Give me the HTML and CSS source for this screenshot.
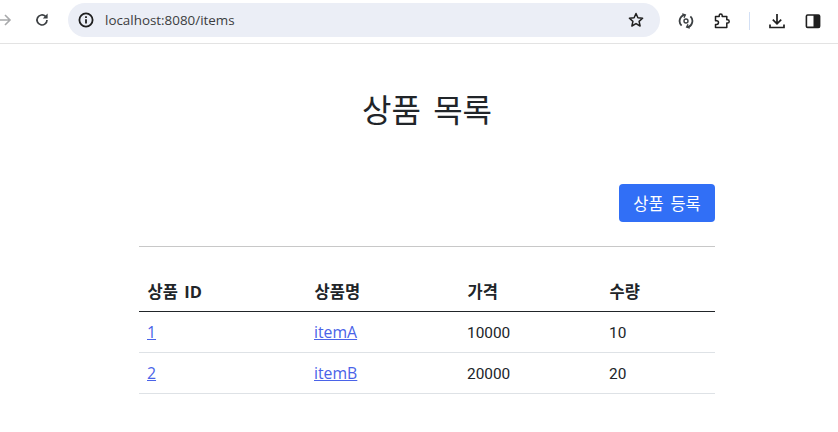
FILE: index.html
```html
<!DOCTYPE html>
<html lang="ko">
<head>
<meta charset="utf-8">
<title>상품 목록</title>
<link rel="stylesheet" href="styles.css">
</head>
<body>
<header class="toolbar">
  <svg class="icon back" viewBox="0 0 16 16"><path d="M-4 8H13M8 3l5 5-5 5" fill="none" stroke="#a8a9ab" stroke-width="1.6"/></svg>
  <svg class="icon reload" viewBox="0 0 16 16"><path d="M13 8a5 5 0 1 1-1.5-3.6" fill="none" stroke="#3c4043" stroke-width="1.7"/><path d="M13.6 1.6v4.8H8.8z" fill="#3c4043"/></svg>
  <div class="omnibox">
    <svg class="icon info" viewBox="0 0 16 16"><circle cx="8" cy="8" r="6.6" fill="none" stroke="#1f1f1f" stroke-width="1.8"/><path d="M8 7.2v4.2M8 4.2v1.7" stroke="#1f1f1f" stroke-width="1.8"/></svg>
    <span class="url">localhost:8080/items</span>
    <svg class="icon star" viewBox="0 0 16 16"><path d="M8 1.5l1.9 4.3 4.7.5-3.5 3.1 1 4.6L8 11.6l-4.1 2.4 1-4.6-3.5-3.1 4.7-.5z" fill="none" stroke="#1f1f1f" stroke-width="1.5" stroke-linejoin="round"/></svg>
  </div>
  <div class="actions">
    <svg class="icon" viewBox="0 0 16 16"><path d="M3.6 12.6A6.3 6.3 0 0 1 7 1.8M12.4 3.4A6.3 6.3 0 0 1 9 14.2" fill="none" stroke="#3c4043" stroke-width="1.8"/><path d="M4.2 .8L7.4 1.8 6 4.8M11.8 15.2L8.6 14.2 10 11.2" fill="none" stroke="#3c4043" stroke-width="1.3"/><circle cx="8" cy="8" r="2" fill="none" stroke="#3c4043" stroke-width="1.4"/></svg>
    <svg class="icon" viewBox="0 0 16 16"><path d="M1.5 3.5h3.7V2.6a1.5 1.5 0 0 1 3 0v.9h4.6v3.3h.8a1.6 1.6 0 0 1 0 3.2h-.8v4.5H1.5v-3.1h1.2a1.8 1.8 0 0 0 0-3.6H1.5z" fill="none" stroke="#1f1f1f" stroke-width="1.5" stroke-linejoin="round"/></svg>
    <span class="divider"></span>
    <svg class="icon" viewBox="0 0 16 16"><path d="M8 1v9.4M3.8 6.6L8 10.8l4.2-4.2M1 11.5v3h14v-3" fill="none" stroke="#1f1f1f" stroke-width="1.7"/></svg>
    <svg class="icon" viewBox="0 0 16 16"><rect x="1.4" y="2" width="13.2" height="12.4" rx="1.2" fill="none" stroke="#1f1f1f" stroke-width="1.6"/><rect x="8.5" y="2" width="6.1" height="12.4" fill="#1f1f1f"/></svg>
  </div>
</header>
<main class="container">
  <h2 class="title">상품 목록</h2>
  <div class="action-row"><button class="btn" type="button">상품 등록</button></div>
  <hr class="rule">
  <table class="items">
    <colgroup><col class="c1"><col class="c2"><col class="c3"><col class="c4"></colgroup>
    <thead><tr><th>상품 ID</th><th>상품명</th><th>가격</th><th>수량</th></tr></thead>
    <tbody>
      <tr><td><a href="#">1</a></td><td><a href="#">itemA</a></td><td class="num">10000</td><td class="num">10</td></tr>
      <tr><td><a href="#">2</a></td><td><a href="#">itemB</a></td><td class="num">20000</td><td class="num">20</td></tr>
    </tbody>
  </table>
</main>
</body>
</html>
```
FILE: styles.css
```css
* { box-sizing: border-box; }
html, body { margin: 0; height: 100%; overflow: hidden; }
body {
  background: #fff;
  color: #212529;
  font-family: "Open Sans", "Noto Sans CJK KR", sans-serif;
  font-size: 15.2px;
}
.toolbar {
  height: 44px;
  border-bottom: 1px solid #e3e3e3;
  display: flex;
  align-items: flex-start;
  position: relative;
}
.icon { width: 16px; height: 16px; flex: none; display: block; }
.back { margin: 12px 0 0 -3px; }
.reload { margin: 12px 0 0 21px; }
.omnibox {
  margin: 3px 0 0 18px;
  width: 592px;
  height: 34px;
  border-radius: 17px;
  background: #ebeef6;
  display: flex;
  align-items: center;
  padding: 0 16px 0 10px;
}
.url { margin-left: 11px; font-size: 13.4px; color: #3b3d40; flex: 1; }
.actions {
  margin: 12px 0 0 18px;
  display: flex;
  align-items: center;
  gap: 20px;
}
.divider { width: 1px; height: 18px; background: #d3e0f5; margin: 0 -1px 0 -1px; }
.container { width: 576px; margin-left: 139px; }
.title {
  margin: 0;
  padding-top: 47px;
  height: 140px;
  text-align: center;
  font-size: 32px;
  font-weight: 400;
  line-height: 38px;
  word-spacing: 4px;
}
.action-row { display: flex; justify-content: flex-end; }
.btn {
  width: 96px;
  height: 38px;
  padding: 0;
  border: 0;
  border-radius: 4px;
  background: #316ff6;
  color: #fff;
  font: inherit;
  font-size: 16.5px;
  word-spacing: 2.5px;
}
.rule { margin: 24px 0 0; border: 0; border-top: 1px solid #c8c8c8; }
.items { width: 100%; margin-top: 24px; border-collapse: collapse; table-layout: fixed; }
.c1 { width: 167px; } .c2 { width: 153px; } .c3 { width: 142px; } .c4 { width: 114px; }
th, td { padding: 0 8px; text-align: left; height: 41px; border-bottom: 1px solid #dee2e6; }
th { height: 40px; padding-left: 8.6px; font-size: 16.5px; font-weight: 700; word-spacing: 2px; border-bottom-color: #212529; }
td { font-size: 15.8px; }
.num { padding-top: 2px; font-family: Roboto, "Noto Sans CJK KR", sans-serif; font-size: 15.4px; }
a { color: #4a63e8; }
```
